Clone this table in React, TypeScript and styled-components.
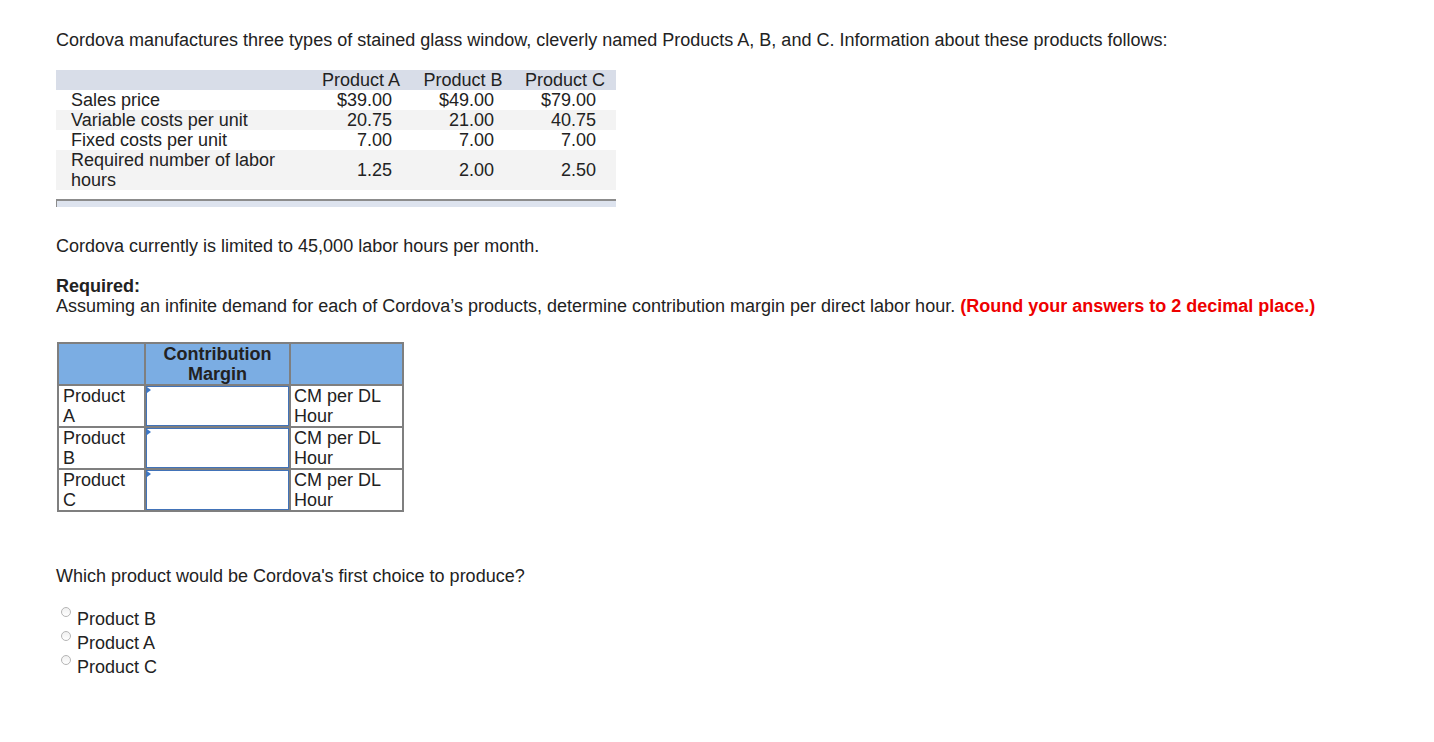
import React from 'react';
import styled, { createGlobalStyle } from 'styled-components';

interface CostRow {
  label: string;
  values: string[];
  shaded: boolean;
}

const costRows: CostRow[] = [
  { label: 'Sales price', values: ['$39.00', '$49.00', '$79.00'], shaded: false },
  { label: 'Variable costs per unit', values: ['20.75', '21.00', '40.75'], shaded: true },
  { label: 'Fixed costs per unit', values: ['7.00', '7.00', '7.00'], shaded: false },
  { label: 'Required number of labor hours', values: ['1.25', '2.00', '2.50'], shaded: true },
];

const answerRows = [
  ['Product', 'A'],
  ['Product', 'B'],
  ['Product', 'C'],
];

const choices = ['Product B', 'Product A', 'Product C'];

const App: React.FC = () => {
  return (
    <>
      <GlobalStyle />
      <Page>
        <Para>
          Cordova manufactures three types of stained glass window, cleverly named Products A, B, and C.
          Information about these products follows:
        </Para>

        <CostTable>
          <thead>
            <tr>
              <HeadCell />
              <HeadCell>Product A</HeadCell>
              <HeadCell>Product B</HeadCell>
              <HeadCell>Product C</HeadCell>
            </tr>
          </thead>
          <tbody>
            {costRows.map((row) => (
              <CostRowTr key={row.label} shaded={row.shaded}>
                <LabelCell>{row.label}</LabelCell>
                {row.values.map((v, i) => (
                  <ValueCell key={i}>{v}</ValueCell>
                ))}
              </CostRowTr>
            ))}
          </tbody>
        </CostTable>
        <TableFoot />

        <LimitText>Cordova currently is limited to 45,000 labor hours per month.</LimitText>

        <Required>
          <strong>Required:</strong>
          <br />
          Assuming an infinite demand for each of Cordova’s products, determine contribution margin per direct
          labor hour. <RedNote>(Round your answers to 2 decimal place.)</RedNote>
        </Required>

        <AnswerTable>
          <thead>
            <tr>
              <AnswerHead width={85} />
              <AnswerHead width={143}>
                Contribution
                <br />
                Margin
              </AnswerHead>
              <AnswerHead width={111} />
            </tr>
          </thead>
          <tbody>
            {answerRows.map(([word, letter]) => (
              <tr key={letter}>
                <NameCell>
                  {word}
                  <br />
                  {letter}
                </NameCell>
                <InputCell>
                  <Marker />
                  <AnswerInput type="text" aria-label={`${word} ${letter} contribution margin`} />
                </InputCell>
                <UnitCell>
                  CM per DL
                  <br />
                  Hour
                </UnitCell>
              </tr>
            ))}
          </tbody>
        </AnswerTable>

        <Question>Which product would be Cordova's first choice to produce?</Question>

        <ChoiceList>
          {choices.map((c) => (
            <Choice key={c}>
              <Radio />
              {c}
            </Choice>
          ))}
        </ChoiceList>
      </Page>
    </>
  );
};

// Styled Components

const GlobalStyle = createGlobalStyle`
  body {
    margin: 0;
    background: #fff;
    font-family: 'Liberation Sans', Arial, Helvetica, sans-serif;
    font-size: 18px;
    color: #222;
  }
`;

const Page = styled.div`
  padding: 30px 56px 40px;
`;

const Para = styled.p`
  margin: 0;
  line-height: 20px;
`;

const CostTable = styled.table`
  margin-top: 20px;
  width: 560px;
  border-collapse: collapse;
  line-height: 20px;
`;

const HeadCell = styled.th`
  background: #d8dde8;
  font-weight: normal;
  text-align: center;
  padding: 0;
  height: 20px;
  white-space: nowrap;

  &:first-child {
    width: 254px;
  }
`;

const CostRowTr = styled.tr<{ shaded: boolean }>`
  background: ${(props) => (props.shaded ? '#f3f3f3' : '#fff')};
`;

const LabelCell = styled.td`
  padding: 0 24px 0 15px;
`;

const ValueCell = styled.td`
  padding: 0 20px 0 0;
  text-align: right;
  width: 82px;
`;

const TableFoot = styled.div`
  margin-top: 9px;
  width: 559px;
  height: 6px;
  border-top: 2px solid #8c8c8c;
  border-left: 1px solid #8c8c8c;
  background: #dde3ee;
`;

const LimitText = styled.p`
  margin: 29px 0 0;
  line-height: 20px;
`;

const Required = styled.p`
  margin: 20px 0 0;
  line-height: 20px;
`;

const RedNote = styled.strong`
  color: #ee0000;
`;

const AnswerTable = styled.table`
  margin: 26px 0 0 1px;
  border-collapse: separate;
  border-spacing: 0;
  border-top: 2px solid #7f7f7f;
  border-left: 2px solid #7f7f7f;
  line-height: 20px;
`;

const AnswerHead = styled.th<{ width: number }>`
  box-sizing: border-box;
  width: ${(props) => props.width + 2}px;
  height: 42px;
  padding: 0;
  background: #7bade3;
  border-right: 2px solid #7f7f7f;
  border-bottom: 2px solid #7f7f7f;
  font-weight: bold;
  text-align: center;
  color: #222;
`;

const BodyCell = styled.td`
  box-sizing: border-box;
  height: 42px;
  padding: 0;
  border-right: 2px solid #7f7f7f;
  border-bottom: 2px solid #7f7f7f;
  vertical-align: middle;
`;

const NameCell = styled(BodyCell)`
  padding: 0 12px 0 4px;
`;

const InputCell = styled(BodyCell)`
  position: relative;
`;

const UnitCell = styled(BodyCell)`
  padding-left: 3px;
`;

const AnswerInput = styled.input`
  display: block;
  box-sizing: border-box;
  width: 143px;
  height: 40px;
  margin: 0;
  border: 1px solid #4273b8;
  background: #fff;
  outline: none;
`;

const Marker = styled.span`
  position: absolute;
  left: 1px;
  top: 1px;
  width: 0;
  height: 0;
  border-top: 3px solid transparent;
  border-bottom: 3px solid transparent;
  border-left: 4px solid #3d78c6;
`;

const Question = styled.p`
  margin: 54px 0 0;
  line-height: 20px;
`;

const ChoiceList = styled.div`
  margin-top: 21px;
  display: flex;
  flex-direction: column;
`;

const Choice = styled.label`
  display: flex;
  align-items: flex-start;
  line-height: 24px;
  height: 24px;
`;

const Radio = styled.span`
  box-sizing: border-box;
  flex: none;
  width: 10px;
  height: 10px;
  margin: 0 6px 0 5px;
  border: 1px solid #b5b5b5;
  border-radius: 50%;
  background: linear-gradient(#f0f0f0, #fff);
`;

export default App;
